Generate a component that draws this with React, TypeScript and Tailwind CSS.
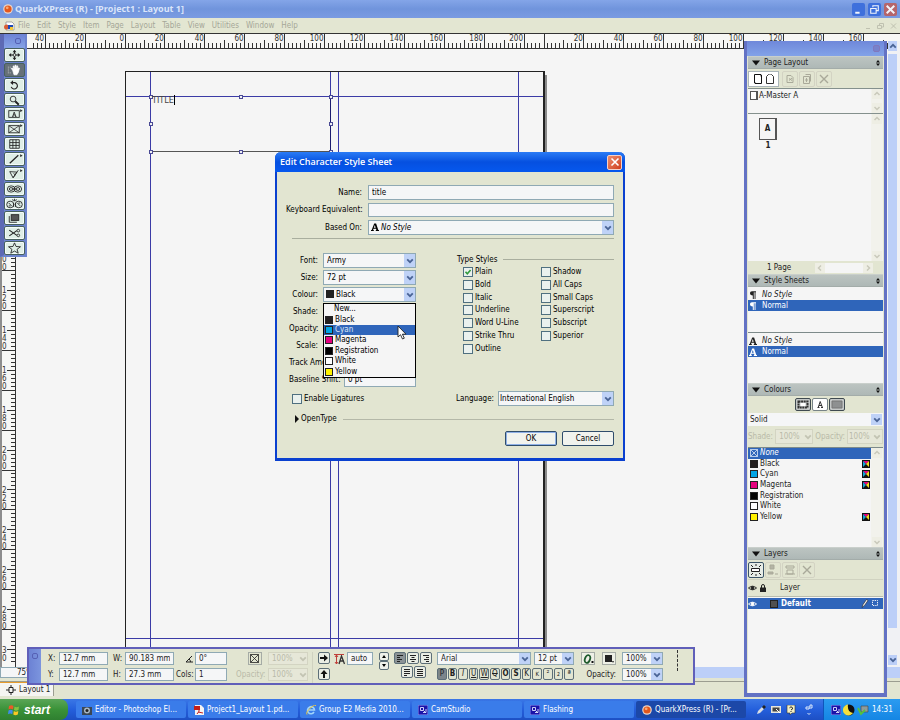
import React, { useState } from 'react';
import clsx from 'clsx';

const MM = 1.995;

const MENUS = ['File', 'Edit', 'Style', 'Item', 'Page', 'Layout', 'Table', 'View', 'Utilities', 'Window', 'Help'];

const SWATCHES = [
  { name: 'Black', color: '#231f20', process: true },
  { name: 'Cyan', color: '#00a4e4', process: true },
  { name: 'Magenta', color: '#e5007e', process: true },
  { name: 'Registration', color: '#000000', process: false },
  { name: 'White', color: '#ffffff', process: false },
  { name: 'Yellow', color: '#fff200', process: true },
];

const TYPE_STYLES_LEFT = ['Plain', 'Bold', 'Italic', 'Underline', 'Word U-Line', 'Strike Thru', 'Outline'];
const TYPE_STYLES_RIGHT = ['Shadow', 'All Caps', 'Small Caps', 'Superscript', 'Subscript', 'Superior'];

const FIELD = 'border border-[#8fa9b4] bg-[#f5f6f7] px-[3px] outline-none';

/* ---------- small shared pieces ---------- */

const Chevron = ({ className = 'text-[#4a6496]' }: { className?: string }) => (
  <svg viewBox="0 0 8 8" className={clsx('h-2 w-2', className)} fill="none" stroke="currentColor" strokeWidth="1.8">
    <path d="M1.2 2.4 4 5.2 6.8 2.4" />
  </svg>
);

type DropProps = {
  label: string;
  options: string[];
  className?: string;
  selectClass?: string;
  disabled?: boolean;
  id?: string;
  children?: React.ReactNode;
};

const Drop = ({ label, options, className, selectClass, disabled, id, children }: DropProps) => (
  <div className={clsx('relative', className)}>
    <select
      id={id}
      aria-label={label}
      disabled={disabled}
      className={clsx(
        'block h-full w-full appearance-none border pr-[10px] pl-[3px] outline-none',
        disabled ? 'border-[#d3d4c2] bg-[#e6e7d8] text-[#b9baa8] opacity-100' : 'border-[#8fa9b4] bg-[#f5f6f7]',
        selectClass,
      )}
    >
      {options.map((o) => (
        <option key={o}>{o}</option>
      ))}
    </select>
    {children}
    <span
      className={clsx(
        'pointer-events-none absolute inset-y-px right-px flex items-center justify-center',
        disabled ? 'w-[9px]' : 'w-[11px] bg-[#bfd2f7]',
      )}
    >
      <Chevron className={disabled ? 'text-[#c3c4b3]' : 'text-[#4a6496]'} />
    </span>
  </div>
);

const Check = ({ label, defaultChecked }: { label: string; defaultChecked?: boolean }) => (
  <label className="flex items-center gap-[2px] whitespace-nowrap">
    <span className="relative flex h-[10px] w-[10px]">
      <input
        type="checkbox"
        defaultChecked={defaultChecked}
        className="peer h-[10px] w-[10px] appearance-none border border-[#4f7080] bg-[#eaf1ee]"
      />
      <svg viewBox="0 0 10 10" className="pointer-events-none absolute inset-0 hidden h-[10px] w-[10px] peer-checked:block" fill="none" stroke="#2f9a3c" strokeWidth="1.6">
        <path d="M2.5 4.8 4.3 6.8 7.6 3" />
      </svg>
    </span>
    {label}
  </label>
);

const Swatch = ({ color }: { color: string }) => (
  <span className="h-2 w-2 shrink-0 border border-[#222]" style={{ backgroundColor: color }} />
);

const CharA = ({ className }: { className?: string }) => (
  <svg viewBox="0 0 8 8" className={clsx('h-2 w-2 shrink-0', className)} fill="currentColor">
    <path d="M0 7h.7L3.2.5h1.9L7.3 7H8v1H4.8V7h.6L5 5.7H2.5L2.1 7h.7v1H0zM2.8 4.7h1.9L3.8 2z" fillRule="evenodd" />
  </svg>
);

const Pilcrow = () => (
  <svg viewBox="0 0 8 8" className="h-2 w-2 shrink-0" fill="currentColor">
    <path d="M3 .3h4v.9h-.5V8h-.9V1.2h-.8V8h-1V4.4C2 4.400 1 3.600 1 2.300S1.800.3 3 .3z" />
  </svg>
);

/* ---------- rulers and page ---------- */

const HorizontalRuler = () => {
  const end = window.innerWidth - 8;
  const ticks: { x: number; v: number }[] = [];
  for (let v = -46; v < 210; v += 2) ticks.push({ x: 125 + v * MM, v });
  for (let v = 0; 544 + v * MM < end; v += 2) ticks.push({ x: 544 + v * MM, v });
  return (
    <div className="h-4 shrink-0 overflow-hidden border-y border-[#333] bg-[#f7f7f5]">
      <svg className="block h-[14px] w-full" shapeRendering="crispEdges">
        {ticks.map(({ x, v }) => {
          const top = v % 20 === 0 ? 0 : v % 10 === 0 ? 6 : 9;
          return <line key={x} x1={x} x2={x} y1={top} y2={14} stroke="#333" />;
        })}
        {ticks.filter(({ x, v }) => v % 20 === 0 && x !== 544).map(({ x, v }) => (
          <text key={x} x={x - 1} y={7} textAnchor="end" fontSize="8" fill="#333">
            {Math.abs(v)}
          </text>
        ))}
      </svg>
    </div>
  );
};

const VerticalRuler = () => {
  const end = window.innerHeight - 106;
  const ticks: number[] = [];
  for (let v = -10; 22 + v * MM < end; v += 2) ticks.push(v);
  return (
    <div className="w-4 shrink-0 overflow-hidden border-r border-l-2 border-r-[#333] border-l-[#8d8d8d] bg-[#f7f7f5]">
      <svg className="block h-full w-[13px]" shapeRendering="crispEdges">
        {ticks.map((v) => {
          const y = 22 + v * MM;
          const left = v % 20 === 0 ? 0 : v % 10 === 0 ? 5 : 9;
          return <line key={v} x1={left} x2={13} y1={y} y2={y} stroke="#333" />;
        })}
        {ticks.filter((v) => v > 80 && v % 20 === 0).map((v) => {
          const digits = String(v).split('');
          return digits.map((d, i) => (
            <text key={`${v}-${i}`} x={0} y={22 + v * MM - 1 - (digits.length - 1 - i) * 8} fontSize="8" fill="#333">
              {d}
            </text>
          ));
        })}
        <text x={0} y={end - 10} fontSize="8" fill="#333">3</text>
        <text x={0} y={end - 2} fontSize="8" fill="#333">0</text>
      </svg>
    </div>
  );
};

const HANDLES = [
  [25, 25], [115, 25], [205, 25],
  [25, 52], [205, 52],
  [25, 80], [115, 80], [205, 80],
];

const PageCanvas = () => (
  <div className="relative min-w-0 flex-1 overflow-hidden bg-[#f5f5f5]">
    <svg width="430" height="640" className="absolute top-[22px] left-[109px]" shapeRendering="crispEdges" fill="none">
      <rect x="419" y="4" width="3" height="590" fill="#8b8b8b" />
      <path d="M0 0h420v594H0z" fill="#222" />
      <path d="M1 1h417v592H1z" fill="#f5f5f5" />
      <path d="M25 1h1v593h-1zM205 1h1v593h-1zM213 1h1v593h-1zM393 1h1v593h-1zM1 25h417v1H1zM1 567h417v1H1z" fill="#3b3ba6" />
      <path d="M25 80h181v1H25z" fill="#555" />
      <path d="M205 26h1v54h-1z" fill="#1c1c70" />
      {HANDLES.map(([x, y]) => (
        <g key={`${x}-${y}`}>
          <rect x={x - 1} y={y - 1} width="4" height="4" fill="#4a4a94" />
          <rect x={x} y={y} width="2" height="2" fill="#f0f0f5" />
        </g>
      ))}
    </svg>
    <p className="absolute top-[46px] left-[136px] border-r border-black text-[9px] leading-[10px] text-[#444]">TITLE</p>
  </div>
);

/* ---------- tool palette ---------- */

const TOOLS: { name: string; art: React.ReactNode }[] = [
  { name: 'Item', art: <><path d="M10 1.500v9M5 6h10" strokeWidth="1.200" /><path d="M8 3l2-2.500L12 3zM8 9l2 2.500L12 9zM6.500 4L4 6l2.500 2zM13.500 4L16 6l-2.500 2z" fill="#222" stroke="none" /><circle cx="10" cy="6" r="1.500" fill="#e3efe9" /></> },
  { name: 'Content', art: <><path d="M3 3h3M3 5h2M3 7h2M3 9h3" stroke="#ccc" strokeDasharray="1 1" /><path d="M8 6 6.500 4.500 7.500 4 9 5.500 8.500 2l1-.3L10.500 5V1h1v4l1-3.500 1 .4-.6 3.300 1.500-1.600.8.600L14 8.500 12.500 11h-3z" fill="#fff" stroke="#fff" strokeWidth=".8" /></> },
  { name: 'Rotation', art: <><path d="M7 3.500h3.500a3.400 3.400 0 1 1-4 4.500" strokeWidth="1.200" /><path d="M8.500 1 5.500 3.500l3 2.500z" fill="#222" stroke="none" /></> },
  { name: 'Zoom', art: <><circle cx="8.500" cy="5" r="3" /><path d="m10.800 7.300 3.700 3.700" strokeWidth="2" /></> },
  { name: 'Text Box', art: <><rect x="4" y="2.500" width="11" height="7" /><path d="M7.500 8.500h1.500M10.500 8.500H12M8.200 8.500 9.700 4l1.600 4.500M8.800 7h2" /><path d="m16 1 2.500 1.500L16 4z" fill="#222" stroke="none" /></> },
  { name: 'Picture Box', art: <><rect x="4" y="2.500" width="11" height="7.500" /><path d="m4 2.500 11 7.500M15 2.500 4 10" strokeWidth=".8" /><path d="m16 1 2.500 1.500L16 4z" fill="#222" stroke="none" /></> },
  { name: 'Tables', art: <path d="M5 1.500h10v9H5zM5 4.500h10M5 7.500h10M8.300 1.500v9M11.600 1.500v9" /> },
  { name: 'Line', art: <><path d="M5 10.500 14 2" strokeWidth="1.300" /><path d="m16 1 2.500 1.500L16 4z" fill="#222" stroke="none" /></> },
  { name: 'Bezier Pen', art: <><path d="M5 3.500 12.500 4 8.500 10M5 3.500l3.500 6.500M8.500 10 14 2M9 5.500l2 1.500" /><path d="m16 1 2.500 1.500L16 4z" fill="#222" stroke="none" /></> },
  { name: 'Linking', art: <><ellipse cx="6.500" cy="6" rx="4" ry="3.300" /><ellipse cx="13.500" cy="6" rx="4" ry="3.300" /><ellipse cx="6.500" cy="6" rx="2" ry="1.500" /><ellipse cx="13.500" cy="6" rx="2" ry="1.500" /><path d="M7 6h6" /></> },
  { name: 'Unlinking', art: <><ellipse cx="5.500" cy="6.500" rx="3.700" ry="3.500" /><ellipse cx="14.500" cy="6.500" rx="3.700" ry="3.500" /><path d="m8 1 1 2M12 1l-1 2M10 .5v2.500M9 5v4M11 5v4M4 5l3 3M13 5l3 3M4 8h2M14 5h2" /></> },
  { name: 'Scale', art: <><rect x="6.500" y="2.500" width="8" height="6" fill="#555" /><path d="M4.500 4v6.500h8" /></> },
  { name: 'Scissors', art: <><path d="m4.500 3 8 5.500M4.500 9l8-5.500" strokeWidth="1.200" /><circle cx="14" cy="3.500" r="1.400" /><circle cx="14" cy="8.500" r="1.400" /></> },
  { name: 'Starburst', art: <path d="m10 .6 1.600 3.800 4.700.3-3.600 2.700 1.200 4.100L10 9.200l-3.900 2.300 1.200-4.100-3.600-2.700 4.700-.3z" /> },
];

const ToolPalette = () => {
  const [active, setActive] = useState('Content');
  return (
    <aside className="absolute top-[34px] left-0 z-10 flex w-[27px] flex-col border-r-2 border-b-2 border-l-4 border-[#6d84ce] border-l-[#5d6ab4] bg-[#6d84ce]">
      <div className="flex h-[14px] items-center justify-end bg-gradient-to-b from-[#6c82d4] to-[#86a3e6] pr-1">
        <span className="h-[6px] w-[6px] rounded-xs border border-[#5661b5]" />
      </div>
      <div className="grid h-[207px] auto-rows-fr gap-px">
        {TOOLS.map((t) => (
          <button
            key={t.name}
            aria-label={`${t.name} tool`}
            onClick={() => setActive(t.name)}
            className={clsx(
              'flex items-center justify-center rounded-xs border border-[#47615f] shadow-[inset_0_0_0_1px_#f4fbf8]',
              active === t.name ? 'bg-[#667078] shadow-none' : 'bg-[#dfeee6]',
            )}
          >
            <svg viewBox="0 0 20 12" className="h-3 w-[19px]" fill="none" stroke="#222" strokeWidth=".9">{t.art}</svg>
          </button>
        ))}
      </div>
    </aside>
  );
};

/* ---------- right hand palettes ---------- */

const PanelHeader = ({ title }: { title: string }) => (
  <h2 className="flex h-[13px] shrink-0 items-center border-y border-t-[#c9cfcb] border-b-[#a3aca9] bg-gradient-to-b from-[#bcc4c1] to-[#aeb8b6] pr-[3px] pl-1">
    <svg viewBox="0 0 8 6" className="mr-1 h-[6px] w-2" fill="#111"><path d="M0 .5h8L4 5.500z" /></svg>
    <span className="flex-1">{title}</span>
    <svg viewBox="0 0 4 6" className="h-[6px] w-1" fill="#111"><path d="M2 0 4 2.500H0zM2 6 0 3.500h4z" /></svg>
  </h2>
);

const GhostArrow = ({ d }: { d: string }) => (
  <svg viewBox="0 0 10 10" className="h-[10px] w-[10px] bg-[#eeeee4]" fill="none" stroke="#c9c9bb" strokeWidth="1.500"><path d={d} /></svg>
);

const ListScroll = () => (
  <div className="flex w-3 shrink-0 flex-col items-center justify-between bg-[#f2f2ec]">
    <GhostArrow d="M2.500 6 5 3.500 7.500 6" />
    <GhostArrow d="M2.500 4 5 6.500 7.500 4" />
  </div>
);

const ToolBtn = ({ label, children, on }: { label: string; children: React.ReactNode; on?: boolean }) => (
  <button aria-label={label} className={clsx('flex h-4 w-4 items-center justify-center rounded-xs border', on ? 'border-[#3c5568] bg-[#e6ece6]' : 'border-[#d3d3c3]')}>
    <svg viewBox="0 0 12 12" className="h-3 w-3 shrink-0" fill="none" stroke={on ? '#222' : '#a9a999'}>{children}</svg>
  </button>
);

const ProcessIcon = () => (
  <svg viewBox="0 0 8 8" className="h-2 w-2 shrink-0">
    <path d="M0 0h8v8H0z" fill="#111" />
    <path d="M1 1h6L4 4z" fill="#e5007e" />
    <path d="M7 1v6L4 4z" fill="#f5dc20" />
    <path d="M1 1v6l3-3z" fill="#12a5d8" />
  </svg>
);

const StyleList = ({ icon, className }: { icon: React.ReactNode; className: string }) => (
  <ul className={clsx('shrink-0 border-[#7d8a8a] bg-[#f5f5f5] pt-[3px]', className)}>
    <li className="flex h-[10px] items-center gap-[5px] px-px italic">{icon}No Style</li>
    <li className="flex h-[11px] items-center gap-[5px] bg-[#2f65ba] px-px text-white">{icon}Normal</li>
  </ul>
);

const Eye = () => (
  <svg viewBox="0 0 10 8" className="h-2 w-[9px]" fill="none" stroke="currentColor">
    <path d="M.5 4Q5 0 9.500 4 5 8 .5 4z" /><circle cx="5" cy="4" r="1.600" fill="currentColor" />
  </svg>
);

const Palettes = () => (
  <aside className="absolute top-[41px] right-[13px] bottom-[23px] z-10 flex w-[143px] flex-col border-x-[3px] border-b-4 border-[#6372c4] bg-[#e2e5d1] px-px">
    <div className="-mx-px flex h-[15px] shrink-0 items-center justify-end bg-gradient-to-b from-[#6f88da] to-[#82a2e8] pr-1">
      <button aria-label="Close palettes" className="h-[7px] w-[7px] rounded-xs border border-[#8078bd] bg-[#7882cc]" />
    </div>

    <PanelHeader title="Page Layout" />
    <div className="flex h-[19px] shrink-0 items-center gap-px">
      <div className="mr-[2px] flex h-4 w-[31px] items-center justify-center gap-1 border border-[#aab5b9] bg-white">
        <svg viewBox="0 0 8 10" className="h-[10px] w-2" fill="#fff" stroke="#111"><path d="M.5.5h6.500v8.500H.5z" /><path d="M7.500 1v8.500H1" /></svg>
        <svg viewBox="0 0 8 10" className="h-[10px] w-2" fill="none" stroke="#333"><path d="M.5 9.500v-7l2-2M7.500 9.500v-7l-2-2M.5 9.500h7" /><path d="M2.500.5h3" strokeDasharray="1 1" /></svg>
      </div>
      <ToolBtn label="Section"><path d="M3 2.500h4l2 2v5H3zM5 5.500l3 2M5 7.500 8 5" /></ToolBtn>
      <ToolBtn label="Duplicate"><path d="M2.500 3.500h6v7h-6zM4.500 1.500h5v7M5.500 5v4M4 7h3" /></ToolBtn>
      <ToolBtn label="Delete"><path d="m2 2 8 8M10 2 2 10" strokeWidth="1.400" /></ToolBtn>
    </div>
    <div className="flex h-[26px] shrink-0 border-y border-[#84908d] bg-[#f5f5f5]">
      <div className="flex flex-1 gap-px pt-[2px] pl-[2px]">
        <span className="h-[9px] w-2 border border-r-2 border-[#555] bg-white" />
        <span>A-Master A</span>
      </div>
      <ListScroll />
    </div>
    <div className="flex h-[147px] shrink-0 bg-[#f5f5f5]">
      <div className="flex-1 pt-[4px] pl-[11px]">
        <div className="flex w-[18px] flex-col items-center font-bold">
          <span className="flex h-[22px] w-[18px] items-center justify-center border border-r-2 border-[#555]">A</span>
          <span className="mt-px">1</span>
        </div>
      </div>
      <ListScroll />
    </div>
    <div className="flex h-[13px] shrink-0 items-center">
      <span className="w-[67px] pl-[19px]">1 Page</span>
      <div className="flex h-[10px] w-[58px] justify-between bg-[#f5f5f5]">
        <GhostArrow d="M6 2.500 3.500 5 6 7.500" />
        <GhostArrow d="M4 2.500 6.500 5 4 7.500" />
      </div>
    </div>

    <PanelHeader title="Style Sheets" />
    <StyleList icon={<Pilcrow />} className="h-[46px] border-b" />
    <StyleList icon={<CharA />} className="h-[50px]" />

    <PanelHeader title="Colours" />
    <div className="flex h-[17px] shrink-0 items-center justify-center gap-px pl-2">
      {['Frame', 'Text', 'Background'].map((n) => (
        <button key={n} aria-label={`${n} colour`} className={clsx('flex h-[13px] w-4 items-center justify-center rounded-xs border', n === 'Text' ? 'border-[#778386] bg-white' : 'border-[#3f4a50] bg-[#c5c8c8]')}>
          <svg viewBox="0 0 12 9" className="h-[9px] w-3" fill="none" stroke="#333">
            {n === 'Frame' && <><path d="M1.500 1.500h9v6h-9z" strokeWidth="2" strokeDasharray="2 .6" /><path d="M3.500 3h5v3h-5z" fill="#fff" stroke="none" /></>}
            {n === 'Text' && <path d="M3.500 7.500h2M7 7.500h2M4.200 7.500l2-6 2.200 6M5 5.500h3" />}
            {n === 'Background' && <path d="M1 1h10v7H1z" fill="#8e9091" stroke="#777" />}
          </svg>
        </button>
      ))}
    </div>
    <Drop label="Blend type" options={['Solid']} className="h-[13px] shrink-0" selectClass="border-transparent! pl-px!" />
    <div className="flex h-[21px] shrink-0 items-center justify-between text-[#b9baa8]">
      <span>Shade:</span>
      <Drop label="Shade" options={['100%']} disabled className="h-[15px] w-[38px]" />
      <span>Opacity:</span>
      <Drop label="Opacity" options={['100%']} disabled className="h-[15px] w-[36px]" selectClass="pl-px!" />
    </div>
    <div className="flex h-[100px] shrink-0 border-t border-[#7d8a8a] bg-[#f5f5f5]">
      <ul className="grid h-[74px] flex-1 auto-rows-fr">
        <li className="flex items-center gap-[2px] bg-[#2f65ba] pr-1 pl-[2px] text-white italic">
          <svg viewBox="0 0 8 8" className="h-2 w-2" fill="none" stroke="#dce7f8" strokeWidth=".8"><path d="M.5.5h7v7h-7zM.5.5l7 7M7.500.5l-7 7" /></svg>
          None
        </li>
        {SWATCHES.map((s) => (
          <li key={s.name} className="flex items-center gap-[2px] pr-px pl-[2px]">
            <Swatch color={s.color} />
            <span className="flex-1">{s.name}</span>
            {s.process && <ProcessIcon />}
          </li>
        ))}
      </ul>
      <ListScroll />
    </div>

    <PanelHeader title="Layers" />
    <div className="flex h-[20px] shrink-0 items-center gap-px border-b border-[#d0d2c0]">
      <ToolBtn label="New layer" on><path d="M1 1l2 2M6 0v2M11 1 9 3M1 11l2-2M6 12v-2M11 11 9 9M1.500 4.500h8v3h-8z" fill="#fff" /></ToolBtn>
      <ToolBtn label="Move item"><path d="M3 1h4v4H3zM1 8h5v2H1zM8 10h3" fill="#b4b4a5" /></ToolBtn>
      <ToolBtn label="Merge layers"><path d="M2 2h8v2H2zM3 6h6v4H3zM1 10h10" /></ToolBtn>
      <ToolBtn label="Delete layer"><path d="m2 2 8 8M10 2 2 10" strokeWidth="1.400" /></ToolBtn>
    </div>
    <div className="flex h-[17px] shrink-0 items-center border-b border-[#b8bcae]">
      <Eye />
      <svg viewBox="0 0 6 8" className="ml-[3px] h-2 w-[6px]" fill="#222"><path d="M0 3.500h6V8H0z" /><path d="M1.500 4V2a1.500 1.500 0 0 1 3 0v2" fill="none" stroke="#222" /></svg>
      <span className="ml-[14px]">Layer</span>
    </div>
    <div className="flex min-h-0 flex-1 flex-col bg-[#f5f5f5]">
      <div className="mt-px flex h-[11px] items-center bg-[#2f65ba] pr-1 text-white">
        <Eye />
        <span className="ml-[13px] h-2 w-2 border border-[#222] bg-[#505050]" />
        <b className="ml-[3px] flex-1">Default</b>
        <svg viewBox="0 0 18 9" className="h-[9px] w-[18px]" fill="none" stroke="#fff"><path d="m1 8.500 1-3 3.500-5 1.500 1-3.500 5z" fill="#eee" stroke="#222" strokeWidth=".6" /><path d="M11.500 1.500h5v5h-5z" strokeDasharray="1.200 1" /></svg>
      </div>
    </div>
  </aside>
);

/* ---------- character style dialog ---------- */

const LeftRow = ({ label, id, children }: { label: string; id: string; children: React.ReactNode }) => (
  <div className="flex h-[15px] items-center gap-[5px]">
    <label htmlFor={id} className="w-[29px] shrink-0 text-right whitespace-nowrap">{label}</label>
    {children}
  </div>
);

const StyleDialog = () => {
  const [picked, setPicked] = useState('Cyan');
  return (
    <section role="dialog" aria-label="Edit Character Style Sheet" className="absolute top-[152px] left-1/2 z-20 w-[350px] -translate-x-1/2 rounded-t-md border-x-2 border-b-[3px] border-[#0a40cf] bg-[#e2e5d1] text-black">
      <header className="-mx-0.5 flex h-5 items-center justify-between rounded-t-md bg-gradient-to-b from-[#2a7bf5] via-[#0650e0] to-[#0658ee] pr-[3px] pl-[5px]">
        <h1 className="font-['Open_Sans','Noto_Sans',sans-serif] text-[9px] font-semibold text-white">Edit Character Style Sheet</h1>
        <button aria-label="Close" className="flex h-[15px] w-[15px] items-center justify-center rounded-xs border border-[#f4d0c8] bg-gradient-to-br from-[#ec8d6d] to-[#cf3c18]">
          <svg viewBox="0 0 10 10" className="h-[10px] w-[10px]" stroke="#fff" strokeWidth="1.600"><path d="m1.500 1.500 7 7M8.500 1.500l-7 7" /></svg>
        </button>
      </header>

      <form className="px-[9px] pt-[13px] pb-[12px]" onSubmit={(e) => e.preventDefault()}>
        <div className="grid grid-cols-[76px_1fr] items-center gap-x-[6px] gap-y-[3px]">
          <label htmlFor="name" className="text-right">Name:</label>
          <input id="name" defaultValue="title" className={clsx(FIELD, 'h-[15px]')} />
          <label htmlFor="key" className="text-right whitespace-nowrap">Keyboard Equivalent:</label>
          <input id="key" className={clsx(FIELD, 'h-[14px]')} />
          <label htmlFor="based" className="text-right">Based On:</label>
          <Drop id="based" label="Based On" options={['No Style']} className="h-[15px]" selectClass="pl-3! italic">
            <CharA className="pointer-events-none absolute top-[3px] left-[3px]" />
          </Drop>
        </div>
        <hr className="mt-[3px] mb-[14px] ml-[6px] border-[#a9ae9e]" />

        <div className="flex justify-between">
          <div className="relative w-[130px] space-y-[2px] pl-[3px]">
            <LeftRow label="Font:" id="font"><Drop id="font" label="Font" options={['Army']} className="h-full flex-1" /></LeftRow>
            <LeftRow label="Size:" id="size"><Drop id="size" label="Size" options={['72 pt']} className="h-full flex-1" /></LeftRow>
            <LeftRow label="Colour:" id="colour">
              <Drop id="colour" label="Colour" options={['Black']} className="h-full flex-1" selectClass="pl-3!">
                <span className="pointer-events-none absolute top-[3px] left-[3px] h-2 w-2 bg-[#222]" />
              </Drop>
            </LeftRow>
            <LeftRow label="Shade:" id="shade"><input id="shade" className={clsx(FIELD, 'h-[14px] w-0 flex-1')} /></LeftRow>
            <LeftRow label="Opacity:" id="opacity"><input id="opacity" className={clsx(FIELD, 'h-[14px] w-0 flex-1')} /></LeftRow>
            <LeftRow label="Scale:" id="scale"><input id="scale" className={clsx(FIELD, 'h-[14px] w-0 flex-1')} /></LeftRow>
            <div className="flex h-[15px] items-center justify-between">
              <label htmlFor="track">Track Amount:</label>
              <input id="track" className={clsx(FIELD, 'h-[14px] w-[60px]')} />
            </div>
            <div className="flex h-[15px] items-center justify-between">
              <label htmlFor="shift">Baseline Shift:</label>
              <input id="shift" defaultValue="0 pt" className={clsx(FIELD, 'h-[14px] w-[72px]')} />
            </div>

            <ul className="absolute top-[50px] right-0 grid h-[75px] w-[93px] auto-rows-fr border border-black bg-[#f5f5f5]">
              <li className="flex items-center pl-[10px]">New...</li>
              {SWATCHES.map((s) => (
                <li
                  key={s.name}
                  onMouseEnter={() => setPicked(s.name)}
                  className={clsx('flex items-center gap-[2px] pl-px', picked === s.name && 'bg-[#2f65ba] text-[#dfe8f6]')}
                >
                  <Swatch color={s.color} />
                  {s.name}
                </li>
              ))}
            </ul>
            <svg viewBox="0 0 10 16" className="pointer-events-none absolute top-[72px] right-[9px] h-4 w-[10px]" fill="#fff" stroke="#222" strokeWidth=".9">
              <path d="M1 1v11l2.500-2.300L5.500 14l1.800-.8-1.900-4H9z" />
            </svg>
          </div>

          <fieldset className="w-[157px]">
            <div className="flex h-[13px] items-center gap-[5px]">
              <span>Type Styles</span>
              <span className="h-px flex-1 bg-[#a9ae9e]" />
            </div>
            <div className="grid h-[89px] grid-flow-col grid-cols-[78px_1fr] grid-rows-7 pl-[6px]">
              {[...TYPE_STYLES_LEFT, ...TYPE_STYLES_RIGHT].map((s) => (
                <Check key={s} label={s} defaultChecked={s === 'Plain'} />
              ))}
            </div>
          </fieldset>
        </div>

        <div className="mt-[2px] flex items-center justify-between pl-[6px]">
          <Check label="Enable Ligatures" />
          <div className="flex items-center gap-1">
            <label htmlFor="lang">Language:</label>
            <Drop id="lang" label="Language" options={['International English']} className="h-[15px] w-[116px]" selectClass="pl-px!" />
          </div>
        </div>
        <div className="mt-[7px] flex h-[12px] items-center gap-[2px] pl-[9px]">
          <svg viewBox="0 0 4 8" className="h-2 w-1" fill="#111"><path d="m0 0 4 4-4 4z" /></svg>
          <span>OpenType</span>
          <span className="ml-1 h-px flex-1 bg-[#b4b8a8]" />
        </div>
        <div className="mt-[6px] flex justify-end gap-[5px]">
          <button className="h-[15px] w-[52px] rounded-xs border border-[#2f4d6c] bg-[#f1f3ee] leading-[10px] shadow-[inset_0_0_0_1px_#8fb0e6]">OK</button>
          <button className="h-[15px] w-[52px] rounded-xs border border-[#2f4d6c] bg-[#f1f3ee] leading-[10px]">Cancel</button>
        </div>
      </form>
    </section>
  );
};

/* ---------- measurements palette ---------- */

const Pair = ({ rows, width, labelWidth, gap }: { rows: [React.ReactNode, string, string][]; width: string; labelWidth: string; gap: string }) => (
  <div className={clsx('flex flex-col gap-[3px]', gap)}>
    {rows.map(([label, name, value]) => (
      <label key={name} className="flex h-[13px] items-center">
        <span className={labelWidth}>{label}</span>
        <input aria-label={name} defaultValue={value} className={clsx(FIELD, 'h-full', width)} />
      </label>
    ))}
  </div>
);

const MiniButton = ({ label, children, className }: { label: string; children: React.ReactNode; className?: string }) => (
  <button aria-label={label} className={clsx('flex items-center justify-center rounded-xs border border-[#5d6f78]', className ?? 'h-3 w-3 bg-[#e9ede4]')}>
    {children}
  </button>
);

const ALIGN = [
  'M1 1.500h6M1 3.500h3M1 5.500h5M1 7.500h3',
  'M1 1.500h6M2.500 3.500h3M1 5.500h6M2.500 7.500h3',
  'M1 1.500h6M4 3.500h3M2 5.500h5M4 7.500h3',
  'M1 1.500h6M1 3.500h6M1 5.500h6M1 7.500h3',
  'M1 1.500h6M1 3.500h6M1 5.500h6M1 7.500h6',
];

const AlignButton = ({ i }: { i: number }) => (
  <MiniButton label={`Align ${i + 1}`} className={i === 0 ? 'h-3 w-3 bg-[#8b9296]' : 'h-3 w-3 bg-[#e9ede4]'}>
    <svg viewBox="0 0 8 9" className="h-[9px] w-2" stroke="#222"><path d={ALIGN[i]} /></svg>
  </MiniButton>
);

const STYLE_KEYS = [
  ['P', 'bg-[#7d868b]'], ['B', 'font-bold'], ['I', 'italic'], ['U', 'underline'], ['W', 'underline'],
  ['Q', 'line-through'], ['O', 'font-bold'], ['S', 'font-bold'], ['K', ''], ['K', 'text-[6px]'], ['²', ''], ['₂', ''], ['ª', ''],
];

const Measurements = () => (
  <section className="absolute bottom-[35px] left-[27px] z-10 flex h-[38px] w-[668px] border-2 border-[#605fb9] bg-[#e2e5d1]">
    <div className="flex w-[12px] justify-center bg-gradient-to-r from-[#6c82d4] to-[#7c95de] pt-1">
      <span className="h-[6px] w-[6px] rounded-xs border border-[#5661b5]" />
    </div>
    <div className="flex flex-1 pt-[3px]">
      <Pair gap="ml-[7px]" labelWidth="w-[11px]" width="w-[49px]" rows={[['X:', 'X', '12.7 mm'], ['Y:', 'Y', '12.7 mm']]} />
      <Pair gap="ml-[5px]" labelWidth="w-[12px]" width="w-[49px]" rows={[['W:', 'W', '90.183 mm'], ['H:', 'H', '27.3 mm']]} />
      <Pair
        gap="ml-[2px]"
        labelWidth="w-[19px] pr-[2px] text-right"
        width="w-[32px]"
        rows={[
          [<svg key="a" viewBox="0 0 8 8" className="ml-auto h-2 w-2" fill="none" stroke="#222"><path d="M7 1 1 7h7M5.500 7q0-2-1.500-3" /></svg>, 'Angle', '0°'],
          ['Cols:', 'Columns', '1'],
        ]}
      />
      <div className="ml-[9px] flex w-[72px] flex-col items-end gap-[3px] text-[#b9baa8]">
        <div className="flex h-[13px] w-full items-center justify-between pl-[12px]">
          <button aria-label="Box background" className="flex h-[13px] w-[14px] items-center justify-center border border-[#a5aba5]">
            <svg viewBox="0 0 10 10" className="h-[10px] w-[10px]" fill="none" stroke="#222"><path d="M.5.5h8v8h-8zM.5.5l8 8M8.500.5l-8 8" strokeWidth=".8" /></svg>
          </button>
          <Drop label="Box shade" options={['100%']} disabled className="h-full w-[40px]" />
        </div>
        <div className="flex h-[13px] w-full items-center justify-between">
          <span>Opacity:</span>
          <Drop label="Box opacity" options={['100%']} disabled className="h-full w-[40px]" />
        </div>
      </div>
      <div className="ml-[4px] flex flex-col gap-[4px] border-l border-[#d0d2c0] pl-[5px]">
        <MiniButton label="Flip horizontal"><svg viewBox="0 0 8 8" className="h-2 w-2" fill="#111"><path d="M0 3h4V.5L8 4 4 7.500V5H0z" /></svg></MiniButton>
        <MiniButton label="Flip vertical"><svg viewBox="0 0 8 8" className="h-2 w-2" fill="#111"><path d="M3 8V4H.5L4 0l3.500 4H5v4z" /></svg></MiniButton>
      </div>
      <label className="ml-[4px] flex h-[13px] items-center gap-[2px]">
        <svg viewBox="0 0 11 12" className="h-3 w-[11px]" fill="none" stroke="#333"><path d="M5 11 7.500 3 10.500 11M6 8h4" strokeWidth="1.300" /><path d="M0 1.500h10M2.500 1.500V11M1 4l1.500-2L4 4M1 9l1.500 2L4 9" stroke="#c0403a" /></svg>
        <input aria-label="Leading" defaultValue="auto" className={clsx(FIELD, 'h-full w-[26px]')} />
      </label>
      <div className="ml-[6px] flex flex-col">
        <MiniButton label="Increase leading" className="h-[9px] w-[10px] bg-[#eef0ea]"><svg viewBox="0 0 4 3" className="h-[3px] w-1"><path d="m0 3 2-3 2 3z" /></svg></MiniButton>
        <MiniButton label="Decrease leading" className="h-[9px] w-[10px] bg-[#eef0ea]"><svg viewBox="0 0 4 3" className="h-[3px] w-1"><path d="m0 0 2 3 2-3z" /></svg></MiniButton>
      </div>
      <div className="ml-[5px] flex flex-col items-center gap-[2px]">
        <div className="flex gap-px">{[0, 1, 2].map((i) => <AlignButton key={i} i={i} />)}</div>
        <div className="flex gap-px">{[3, 4].map((i) => <AlignButton key={i} i={i} />)}</div>
      </div>
      <div className="ml-[5px] flex w-[137px] flex-col gap-[3px]">
        <div className="flex h-[13px] gap-[3px]">
          <Drop label="Font family" options={['Arial']} className="h-full flex-1" />
          <Drop label="Font size" options={['12 pt']} className="h-full w-[40px]" />
        </div>
        <div className="flex gap-px">
          {STYLE_KEYS.map(([k, cls], i) => (
            <button key={i} className={clsx('flex h-3 flex-1 items-center justify-center rounded-xs border border-[#5d6f78]', cls)}>{k}</button>
          ))}
        </div>
      </div>
      <div className="ml-[7px] flex flex-col gap-[3px]">
        <div className="flex h-[13px] items-center gap-[7px]">
          <button aria-label="OpenType" className="flex h-[13px] w-[14px] items-center justify-center border border-[#a5aba5] bg-[#eef0e6]">
            <svg viewBox="0 0 12 10" className="h-[10px] w-3 shrink-0" fill="none" stroke="#1d5a2b"><ellipse cx="5.500" cy="5" rx="2.500" ry="4" strokeWidth="1.800" transform="rotate(20 5.500 5)" /><path d="M9.500 8h2" strokeWidth="2" stroke="#111" /></svg>
          </button>
          <button aria-label="Text colour" className="flex h-[13px] w-[14px] items-center justify-center border border-[#a5aba5] bg-[#eef0e6]">
            <svg viewBox="0 0 10 10" className="h-[10px] w-[10px]" fill="#222"><path d="M1 1h7v7H1zM8 7h2L9 9z" /></svg>
          </button>
        </div>
        <label htmlFor="text-opacity" className="flex h-[13px] items-center justify-end">Opacity:</label>
      </div>
      <div className="ml-[6px] flex flex-col gap-[3px]">
        <Drop label="Text shade" options={['100%']} className="h-[13px] w-[41px]" />
        <Drop id="text-opacity" label="Text opacity" options={['100%']} className="h-[13px] w-[41px]" />
      </div>
      <div className="-mt-[2px] ml-[14px] h-[21px] border-l border-dashed border-[#333]" />
    </div>
  </section>
);

/* ---------- window frame and taskbar ---------- */

const QuarkLogo = ({ className }: { className?: string }) => (
  <svg viewBox="0 0 10 10" className={clsx('h-[10px] w-[10px] shrink-0', className)}>
    <circle cx="5" cy="5" r="4.800" fill="#e9d5cb" />
    <circle cx="5" cy="5" r="3.600" fill="#e4571b" />
    <circle cx="4.200" cy="3.800" r="1.400" fill="#f6a774" />
  </svg>
);

const CamIcon = () => (
  <svg viewBox="0 0 10 10" className="h-[10px] w-[10px] shrink-0" fill="none" stroke="#dfe2ff">
    <path d="M0 0h10v10H0z" fill="#1a12a8" stroke="#8d93ee" />
    <path d="M2.500 2.500h3v3h-3zM6 6l2 2M5 7.500h3V4" strokeWidth=".9" />
  </svg>
);

const TASKS = [
  { label: 'Editor - Photoshop El...', icon: <svg viewBox="0 0 10 10" className="h-[10px] w-[10px] shrink-0"><path d="M0 2h10v8H0z" fill="#3a4654" /><circle cx="5" cy="5.500" r="3" fill="#a9b7c4" /><circle cx="5" cy="5.500" r="1.500" fill="#222" /></svg> },
  { label: 'Project1_Layout 1.pd...', icon: <svg viewBox="0 0 10 10" className="h-[10px] w-[10px] shrink-0"><path d="M1 0h6l3 3v7H1z" fill="#f3f3f3" /><path d="M0 1h6v4H0z" fill="#c51f1a" /><path d="M3 9q3-3 2-5M4 7l5 1" stroke="#c51f1a" fill="none" /></svg> },
  { label: 'Group E2 Media 2010...', icon: <svg viewBox="0 0 10 10" className="h-[10px] w-[10px] shrink-0" fill="none"><path d="M8 7A3.500 3.500 0 1 1 8.500 5H2.500" stroke="#9fd4fb" strokeWidth="1.600" /><path d="M1 9.500Q-.5 7 5 2.500T9.500 1" stroke="#f0c93c" /></svg> },
  { label: 'CamStudio', icon: <CamIcon /> },
  { label: 'Flashing', icon: <CamIcon /> },
  { label: 'QuarkXPress (R) - [Pr...', icon: <QuarkLogo />, active: true },
];

const Taskbar = () => (
  <footer className="relative z-30 flex h-[21px] shrink-0 items-stretch bg-gradient-to-b from-[#3b77e6] via-[#245fdc] to-[#1d4fc4] text-white">
    <button className="mr-2 flex w-[68px] items-center gap-1 rounded-r-lg bg-gradient-to-b from-[#5aa657] via-[#3a9238] to-[#2f7f30] pl-2 font-['Liberation_Sans',Arial,sans-serif] text-[12px] font-bold italic">
      <svg viewBox="0 0 12 12" className="h-3 w-3">
        <path d="M1 2q2.500-1.500 4.500 0L5 5.500q-2-1.300-4.500 0z" fill="#ec5a28" />
        <path d="M6.500 2.500q2 1.300 4.500 0L10.500 6q-2.500 1.300-4.500 0z" fill="#83c341" />
        <path d="M.5 6.500q2.500-1.300 4.300 0l-.5 3.700q-2-1.300-4.300 0z" fill="#3f8bea" />
        <path d="M5.800 7q2 1.300 4.500 0l-.5 3.500q-2.500 1.300-4.500 0z" fill="#f9c824" />
      </svg>
      start
    </button>
    <nav className="flex min-w-0 flex-1 gap-[2px] py-[2px]">
      {TASKS.map((t) => (
        <button
          key={t.label}
          className={clsx('flex min-w-0 flex-1 items-center gap-[3px] overflow-hidden rounded-xs pl-[6px] whitespace-nowrap', t.active ? 'bg-[#1c48a8]' : 'bg-[#3a7cea]')}
        >
          {t.icon}
          {t.label}
        </button>
      ))}
    </nav>
    <div className="flex w-[77px] items-center gap-[5px] pl-[10px]">
      <svg viewBox="0 0 10 10" className="h-[10px] w-[10px]"><path d="m1 9 1-3 4-4 2 2-4 4z" fill="#d7dde4" /><path d="m6 2 2-2 2 2-2 2z" fill="#222" /></svg>
      <svg viewBox="0 0 10 10" className="h-[10px] w-[10px]"><path d="M0 1h10v7H0z" fill="#e5e5dc" /><path d="M1.500 2.500h7v4h-7z" fill="#444" /><path d="m5 4 4 4" stroke="#fff" /></svg>
      <svg viewBox="0 0 10 10" className="h-[10px] w-[10px]"><path d="M1 0h8v8H6L4 10V8H1z" fill="#f3efc5" stroke="#333" strokeWidth=".6" /><path d="M3.500 2.800Q5 1 6.300 2.500T5 5M5 6v1" stroke="#222" fill="none" /></svg>
      <svg viewBox="0 0 8 12" className="ml-1 h-3 w-2" fill="none" stroke="#dbe8fb"><path d="M2 3h3V1h2v3H4v1H1V3z" /><path d="m2.500 9 1.500 1.500L5.500 9" /></svg>
    </div>
    <div className="flex w-[77px] items-center gap-[2px] border-l border-[#0f56bb] bg-gradient-to-b from-[#2b9bf0] to-[#1486e4] pl-[7px]">
      <CamIcon />
      <svg viewBox="0 0 12 12" className="h-3 w-3"><circle cx="6" cy="6" r="5.500" fill="#111" /><path d="M5 .5a5.500 5.500 0 1 0 5 8.500Q4 8 5 .5z" fill="#f7e13c" /></svg>
      <svg viewBox="0 0 12 12" className="h-3 w-3"><path d="M4 2h7v6H4z" fill="#8d9a9c" stroke="#444" strokeWidth=".6" /><path d="m1 4 3 6 4-4" stroke="#57c13b" strokeWidth="1.800" fill="none" /></svg>
      <time className="ml-[1px]">14:31</time>
    </div>
  </footer>
);

const TitleBar = () => (
  <header className="flex h-[18px] shrink-0 items-center bg-gradient-to-b from-[#84a5e8] via-[#7094dc] to-[#7a9be2] px-[3px]">
    <QuarkLogo className="mr-[2px]" />
    <h1 className="flex-1 font-['Open_Sans','Noto_Sans',sans-serif] text-[9px] font-bold text-[#dbe5fa]">QuarkXPress (R) - [Project1 : Layout 1]</h1>
    <div className="flex gap-[3px]">
      {[
        { name: 'Minimise', d: 'M3 9h4' },
        { name: 'Restore', d: 'M4.500 4V2.500h5V7H8M2.500 5h5v4.500h-5z' },
        { name: 'Close window', d: 'm2.500 2.500 7 7M9.500 2.500l-7 7' },
      ].map((b) => (
        <button key={b.name} aria-label={b.name} className={clsx('h-[13px] w-[13px] rounded-xs', b.name === 'Close window' ? 'bg-[#b5656b]' : 'bg-[#3e70dc]')}>
          <svg viewBox="0 0 12 12" className="block h-full w-full" fill="none" stroke="#f2f5fc" strokeWidth={b.name === 'Restore' ? 1 : 1.8}><path d={b.d} /></svg>
        </button>
      ))}
    </div>
  </header>
);

const MenuBar = () => (
  <nav className="flex h-[15px] shrink-0 items-center gap-[7px] bg-[#e3e6d2] px-[3px] text-[#a5a798]">
    <svg viewBox="0 0 12 10" className="-mr-1 h-[10px] w-3"><path d="M3 1h6l2 2v6H3z" fill="#fff" stroke="#777" strokeWidth=".6" /><circle cx="3.500" cy="6" r="2.500" fill="#d95f35" /><path d="M5 4h5v4H5z" fill="#1d49b5" /><path d="M7 6h3v3H7z" fill="#f4c93b" /></svg>
    {MENUS.map((m) => (
      <button key={m}>{m}</button>
    ))}
    <svg viewBox="0 0 34 8" className="ml-auto h-2 w-[34px]" fill="none" stroke="#bfc1b0"><path d="M3 6.500h4M16.500 3V1.500h4V5H19M14.500 3.500h4v3h-4zM28 1.500l5 5M33 1.500l-5 5" /></svg>
  </nav>
);

export default function App() {
  return (
    <div className="relative flex h-screen flex-col overflow-hidden bg-[#e2e5d1] font-['DejaVu_Sans_Condensed','Liberation_Sans',sans-serif] text-[8px] leading-[10px] text-[#222]">
      <TitleBar />
      <MenuBar />
      <HorizontalRuler />
      <main className="flex min-h-0 flex-1">
        <VerticalRuler />
        <PageCanvas />
        <div className="-mt-2 flex w-[12px] shrink-0 flex-col bg-[#f0f1f4] pr-[3px]">
          <div className="mb-[3px] flex h-[10px] items-center justify-center bg-[#bccff8]"><Chevron className="rotate-180 text-[#4a6496]" /></div>
          <div className="mb-[3px] flex-1 bg-[#bccff8]" />
          <div className="h-[24px]" />
          <div className="mb-[2px] flex h-[10px] items-center justify-center bg-[#bccff8]"><Chevron /></div>
        </div>
      </main>
      <div className="flex h-[15px] shrink-0 border-b border-[#9b9d90]">
        <input aria-label="View scale" defaultValue="75%" className="h-[11px] w-[60px] border border-[#8fa9b4] bg-[#f5f6f7] pl-4" />
        <div className="h-[11px] flex-1 bg-[#bccff8]" />
      </div>
      <div className="flex h-[17px] shrink-0 items-start">
        <button className="flex h-[14px] w-[54px] items-center gap-[3px] border-t border-r border-t-[#e79c2c] border-r-[#9b9d90] bg-[#f5f5f2] pl-[6px] whitespace-nowrap">
          <svg viewBox="0 0 10 10" className="h-[10px] w-[10px] shrink-0" fill="none" stroke="#222"><path d="M3 2.500h4v5H3zM0 5h3M7 5h3M5 0v2.500M5 7.500V10" /></svg>
          Layout 1
        </button>
      </div>
      <Taskbar />

      <ToolPalette />
      <Palettes />
      <Measurements />
      <StyleDialog />
    </div>
  );
}
